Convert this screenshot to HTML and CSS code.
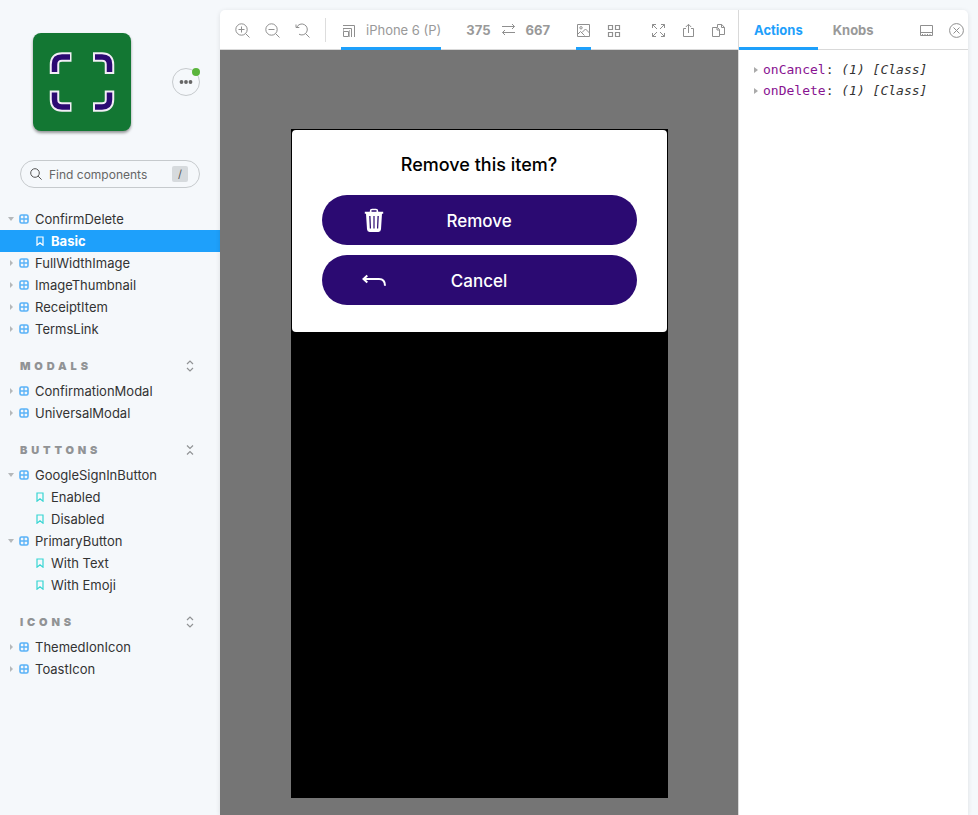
FILE: index.html
```html
<!DOCTYPE html>
<html lang="en">
<head>
<meta charset="utf-8">
<meta name="viewport" content="width=device-width, initial-scale=1">
<title>ConfirmDelete - Basic</title>
<link rel="stylesheet" href="styles.css">
</head>
<body>
<svg class="sprite" aria-hidden="true">
  <symbol id="component" viewBox="0 0 10 10"><rect x="1" y="1" width="8" height="8" rx="1.500" fill="none" stroke="currentColor" stroke-width="1.600"/><path d="M5 1v8M1 5h8" stroke="currentColor" stroke-width="1.300"/></symbol>
  <symbol id="bookmark" viewBox="0 0 10 10"><path d="M2 1h6v8.200L5 6.800 2 9.200z" fill="none" stroke="currentColor" stroke-width="1.200"/></symbol>
  <symbol id="expand" viewBox="0 0 10 12"><path d="M2 4l3-3 3 3M2 8l3 3 3-3" fill="none" stroke="currentColor" stroke-width="1.200"/></symbol>
  <symbol id="collapse" viewBox="0 0 10 12"><path d="M2 1.500l3 3 3-3M2 10.500l3-3 3 3" fill="none" stroke="currentColor" stroke-width="1.200"/></symbol>
</svg>
<div class="app">
  <nav class="sidebar" aria-label="Stories">
    <header class="brand">
      <a class="logo" href="#" aria-label="Home">
        <svg viewBox="0 0 98 98" width="98" height="98" fill="none">
          <g stroke="#f2eef6" stroke-width="9.500"><path d="M21.500 41V31.500q0-7.500 7.500-7.500H38.500M60 24h9q7.500 0 7.500 7.500V41M21.500 57.500V66.500q0 7.500 7.500 7.500H38.500M60 74h9q7.500 0 7.500-7.500v-9"/></g>
          <g stroke="#2b0a72" stroke-width="5.500"><path d="M21.500 39V31.500q0-7.500 7.500-7.500H37M62 24h7q7.500 0 7.500 7.500V39M21.500 59.500V66.500q0 7.500 7.500 7.500H37M62 74h7q7.500 0 7.500-7.500v-7"/></g>
        </svg>
      </a>
      <button class="menu" type="button" aria-label="Shortcuts"><svg viewBox="0 0 14 6" width="14" height="6" fill="currentColor"><circle cx="2.500" cy="3" r="1.900"/><circle cx="7" cy="3" r="1.900"/><circle cx="11.500" cy="3" r="1.900"/></svg></button>
    </header>
    <label class="search">
      <svg viewBox="0 0 12 12" width="12" height="12" fill="none" stroke="currentColor"><circle cx="5" cy="5" r="4.300"/><path d="M8.100 8.100l3.500 3.500"/></svg>
      <input type="search" placeholder="Find components" aria-label="Find components">
      <kbd>/</kbd>
    </label>
    <ul class="tree">
      <li><a class="open" href="#"><svg class="kind"><use href="#component"/></svg>ConfirmDelete</a></li>
      <li><a class="story selected" href="#" aria-current="page"><svg class="kind"><use href="#bookmark"/></svg>Basic</a></li>
      <li><a href="#"><svg class="kind"><use href="#component"/></svg>FullWidthImage</a></li>
      <li><a href="#"><svg class="kind"><use href="#component"/></svg>ImageThumbnail</a></li>
      <li><a href="#"><svg class="kind"><use href="#component"/></svg>ReceiptItem</a></li>
      <li><a href="#"><svg class="kind"><use href="#component"/></svg>TermsLink</a></li>
    </ul>
    <div class="group"><h2>MODALS</h2><button type="button" aria-label="Expand Modals"><svg width="10" height="12"><use href="#expand"/></svg></button></div>
    <ul class="tree">
      <li><a href="#"><svg class="kind"><use href="#component"/></svg>ConfirmationModal</a></li>
      <li><a href="#"><svg class="kind"><use href="#component"/></svg>UniversalModal</a></li>
    </ul>
    <div class="group"><h2>BUTTONS</h2><button type="button" aria-label="Collapse Buttons"><svg width="10" height="12"><use href="#collapse"/></svg></button></div>
    <ul class="tree">
      <li><a class="open" href="#"><svg class="kind"><use href="#component"/></svg>GoogleSignInButton</a></li>
      <li><a class="story" href="#"><svg class="kind"><use href="#bookmark"/></svg>Enabled</a></li>
      <li><a class="story" href="#"><svg class="kind"><use href="#bookmark"/></svg>Disabled</a></li>
      <li><a class="open" href="#"><svg class="kind"><use href="#component"/></svg>PrimaryButton</a></li>
      <li><a class="story" href="#"><svg class="kind"><use href="#bookmark"/></svg>With Text</a></li>
      <li><a class="story" href="#"><svg class="kind"><use href="#bookmark"/></svg>With Emoji</a></li>
    </ul>
    <div class="group"><h2>ICONS</h2><button type="button" aria-label="Expand Icons"><svg width="10" height="12"><use href="#expand"/></svg></button></div>
    <ul class="tree">
      <li><a href="#"><svg class="kind"><use href="#component"/></svg>ThemedIonIcon</a></li>
      <li><a href="#"><svg class="kind"><use href="#component"/></svg>ToastIcon</a></li>
    </ul>
  </nav>

  <div class="workspace">
    <main class="preview">
      <div class="bar toolbar">
        <button class="tool" type="button" aria-label="Zoom in"><svg viewBox="0 0 15 15"><circle cx="6.500" cy="6.500" r="5.700"/><path d="M10.600 10.600l3.900 3.900M3.500 6.500h6M6.500 3.500v6"/></svg></button>
        <button class="tool" type="button" aria-label="Zoom out"><svg viewBox="0 0 15 15"><circle cx="6.500" cy="6.500" r="5.700"/><path d="M10.600 10.600l3.900 3.900M3.500 6.500h6"/></svg></button>
        <button class="tool" type="button" aria-label="Reset zoom"><svg viewBox="0 0 15 15"><path d="M1.800 4.200A5.500 5.500 0 1 1 4 11.200M1 1.500v3h3.300M10.600 10.600l3.900 3.900"/></svg></button>
        <span class="divider"></span>
        <button class="tool viewport active" type="button"><svg viewBox="0 0 15 15"><path d="M2 2.500h11.500V14M2 5.500h8.500V14M2.500 8.500h5v5h-5z"/><path d="M2.500 5.500v3M8.500 7v7" opacity=".6"/></svg>iPhone 6 (P)</button>
        <div class="size">375<button class="tool" type="button" aria-label="Rotate viewport"><svg viewBox="0 0 15 15"><path d="M1 4.500h12.500M11 2l2.500 2.500L11 7M14 10.500H1.500M4 8l-2.500 2.500L4 13"/></svg></button>667</div>
        <button class="tool active" type="button" aria-label="Change background"><svg viewBox="0 0 15 15"><path d="M1.500 1.500h12v12h-12zM1.500 11.500l3-3 3 3M6 9.500l3.500-3.500 4 4M8.500 12.500L7 11"/><circle cx="5" cy="4.800" r="1.200"/></svg></button>
        <button class="tool" type="button" aria-label="Grid"><svg viewBox="0 0 15 15"><path d="M2.500 2.500h4v4h-4zM9.500 2.500h4v4h-4zM2.500 9.500h4v4h-4zM9.500 9.500h4v4h-4z" stroke-width="1.200"/></svg></button>
        <div class="actions">
          <button class="tool" type="button" aria-label="Full screen"><svg viewBox="0 0 15 15"><path d="M1.500 5V1.500H5M1.500 1.500L6 6M10 1.500h3.500V5M13.500 1.500L9 6M1.500 10v3.500H5M1.500 13.500L6 9M13.500 10v3.500H10M13.500 13.500L9 9"/></svg></button>
          <button class="tool" type="button" aria-label="Open in new tab"><svg viewBox="0 0 15 15"><path d="M5 5.500H2.500v8h10v-8H10M7.500 10V1.500M4.800 4L7.500 1.300 10.200 4"/></svg></button>
          <button class="tool" type="button" aria-label="Copy link"><svg viewBox="0 0 15 15"><path d="M8.500 11.500h5v-7L10.800 1.500H6.500V4M10.500 1.500v3h3M6.500 4.500h-5v9h7v-7zM6 4.500v2.500h2.500"/></svg></button>
        </div>
      </div>
      <div class="canvas">
        <div class="device">
          <section class="dialog" aria-labelledby="question">
            <h1 id="question">Remove this item?</h1>
            <button class="primary" type="button"><svg viewBox="0 0 26 26" width="26" height="26"><path fill="#fff" fill-rule="evenodd" d="M8.800 3.700V3q0-2.300 2.300-2.300h3.800q2.300 0 2.300 2.300v.7h5v2h-1.200l-1 15.600q-.2 2.600-2.600 2.600H8.600Q6.200 23.900 6 21.300L5 5.700H3.800V3.700zM10.500 3.700h5V2.300h-5zM8.200 8l.6 12.500h1.200L9.500 8zM12.400 8v12.500h1.200V8zM16.500 8l-.5 12.500h1.200l.6-12.500z"/></svg><span>Remove</span></button>
            <button class="primary" type="button"><svg viewBox="0 0 26 26" width="26" height="26" fill="none" stroke="#fff" stroke-width="2"><path d="M2.500 11H18q6 0 6 6.700M6.300 7.500L2.500 11l3.800 3.500"/></svg><span>Cancel</span></button>
          </section>
        </div>
      </div>
    </main>

    <aside class="panel" aria-label="Addons">
      <div class="bar tabs">
        <button class="tab active" type="button">Actions</button>
        <button class="tab" type="button">Knobs</button>
        <div class="actions">
          <button class="tool" type="button" aria-label="Change orientation"><svg viewBox="0 0 15 15"><path d="M1.500 2.500h12v10h-12zM1.500 9.500h12M3 11.500h1M5.500 11.500h1M8 11.500h1M10.500 11.500h1"/></svg></button>
          <button class="tool" type="button" aria-label="Hide addons"><svg viewBox="0 0 15 15"><circle cx="7.500" cy="7.500" r="6.900"/><path d="M4.500 4.500l6 6M10.500 4.500l-6 6"/></svg></button>
        </div>
      </div>
      <ul class="log">
        <li><span class="arrow"></span><span class="name">onCancel</span>:&nbsp;<em>(1) [Class]</em></li>
        <li><span class="arrow"></span><span class="name">onDelete</span>:&nbsp;<em>(1) [Class]</em></li>
      </ul>
    </aside>
  </div>
</div>
</body>
</html>
```
FILE: styles.css
```css
* { box-sizing: border-box; }

body {
  margin: 0;
  background: #f5f8fb;
  color: #333;
  font: 13px/22px Inter, "Liberation Sans", sans-serif;
}

button {
  padding: 0;
  border: 0;
  background: none;
  color: inherit;
  font: inherit;
  cursor: pointer;
}

a { color: inherit; text-decoration: none; }
ul { margin: 0; padding: 0; list-style: none; }
svg { flex: none; display: block; }
.sprite { position: absolute; width: 0; height: 0; }

.app { display: flex; min-height: 100vh; }

.sidebar { flex: 0 0 220px; min-width: 0; padding: 33px 0 20px; }

.brand {
  display: flex;
  align-items: center;
  justify-content: space-between;
  padding: 0 20px 0 33px;
}

.logo {
  border-radius: 8px;
  background: #137733;
  box-shadow: 0 2px 3px rgba(0, 0, 0, .4);
}

.menu {
  position: relative;
  display: flex;
  align-items: center;
  justify-content: center;
  width: 28px;
  height: 28px;
  border: 1px solid #c6cacd;
  border-radius: 50%;
  color: #666;
}

.menu::after {
  content: "";
  position: absolute;
  top: -1px;
  right: -1px;
  width: 8px;
  height: 8px;
  border-radius: 50%;
  background: #5ab53c;
}

.search {
  display: flex;
  align-items: center;
  gap: 7px;
  height: 28px;
  margin: 29px 20px 20px;
  padding: 0 11px 0 9px;
  border: 1px solid #c6cacd;
  border-radius: 14px;
  color: #555;
}

.search input {
  flex: 1;
  min-width: 0;
  padding: 1px 0 0;
  border: 0;
  outline: 0;
  background: none;
  font: 12px/16px Inter, sans-serif;
}

.search input::placeholder { color: #666; opacity: 1; }

.search kbd {
  width: 16px;
  border-radius: 2px;
  background: #d6dadd;
  font: 11px/16px Inter, sans-serif;
  text-align: center;
}

.tree a {
  display: flex;
  align-items: center;
  height: 22px;
  padding-left: 8px;
}

.tree a::before {
  content: "";
  width: 0;
  margin: 0 6px 0 2px;
  border: solid transparent;
  border-width: 3px 0 3px 3px;
  border-left-color: #b5b8ba;
}

.tree a.open::before {
  margin: 0 5px 0 0;
  border-width: 4px 3px 0;
  border-color: #b5b8ba transparent transparent;
}

.tree .kind { width: 10px; height: 10px; margin-right: 6px; color: #5ab2f7; }

.tree a.story { padding-left: 35px; }
.tree a.story::before { display: none; }
.tree .story .kind { color: #37d5d3; }
.tree .selected { background: #1ea0fb; color: #fff; font-weight: 700; }
.tree .selected .kind { color: #fff; }

.group {
  display: flex;
  align-items: center;
  justify-content: space-between;
  height: 20px;
  margin: 16px 25px 4px 20px;
  color: #919395;
}

.group h2 { margin: 0; font-size: 11px; font-weight: 900; letter-spacing: .35em; }

.workspace {
  display: flex;
  flex: 1;
  min-width: 0;
  margin: 10px 10px 0 0;
  border-radius: 5px 5px 0 0;
  overflow: hidden;
  background: #fff;
  box-shadow: 0 1px 5px rgba(0, 0, 0, .1);
}

.preview { display: flex; flex: 1; flex-direction: column; min-width: 0; }

.bar {
  display: flex;
  height: 40px;
  border-bottom: 1px solid #d9d9d9;
  color: #999;
}

.toolbar { gap: 15px; padding: 0 12px 0 15px; }

.tool {
  display: flex;
  align-items: center;
  height: 40px;
  white-space: nowrap;
}

.tool svg { width: 15px; height: 15px; fill: none; stroke: #8f8f8f; stroke-width: 1; }
.active { border-bottom: 3px solid #1ea0fb; }
.tool.active { padding-top: 3px; }
.divider { width: 1px; height: 24px; margin-top: 8px; background: #ddd; }
.viewport { gap: 10px; }
.size { display: flex; align-items: center; gap: 10px; margin: 0 11px 0 10px; font-weight: 700; }
.actions { display: flex; gap: 15px; margin-left: auto; }

.canvas {
  flex: 1;
  padding: 79px 20px 17px;
  background: #757575;
}

.device {
  max-width: 377px;
  min-height: 669px;
  margin: 0 auto;
  border: 1px solid #000;
  background: #000;
}

.dialog {
  padding: 22px 30px 27px;
  border-radius: 4px;
  background: #fff;
  color: #000;
}

.dialog h1 { margin: 0 0 17px; font-size: 18px; line-height: 26px; font-weight: 500; text-align: center; }

.primary {
  display: grid;
  grid-template-columns: 60px 1fr 60px;
  align-items: center;
  width: 100%;
  height: 50px;
  padding: 2px 5px 0;
  border-radius: 25px;
  background: #2b0a72;
  color: #fff;
  font-size: 17px;
  font-weight: 500;
}

.primary + .primary { margin-top: 10px; }
.primary svg { justify-self: end; }

.panel { flex: 0 0 230px; border-left: 1px solid #d9d9d9; }
.tab { height: 40px; padding: 0 15px; font-weight: 700; }
.tab.active { padding-top: 3px; color: #1ea0fb; }
.tabs .actions { padding-right: 4px; }

.log {
  padding: 9px 15px;
  font: 13px/21px "DejaVu Sans Mono", "Liberation Mono", monospace;
}

.log li { display: flex; align-items: center; }

.log .arrow {
  margin-right: 5px;
  border: solid transparent;
  border-width: 3px 0 3px 4px;
  border-left-color: #aaa;
}

.log .name { color: #881391; }
```
